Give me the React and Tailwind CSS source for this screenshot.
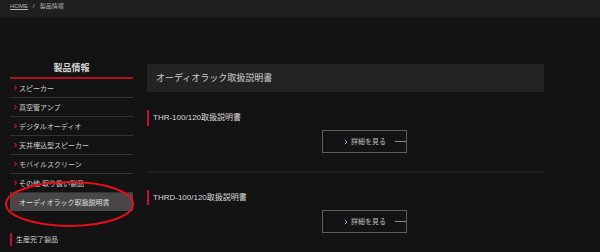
const SIDE_ITEMS = [
  'スピーカー',
  '真空管アンプ',
  'デジタルオーディオ',
  '天井埋込型スピーカー',
  'モバイルスクリーン',
  'その他 取り扱い製品',
];

const MANUALS = ['THR-100/120取扱説明書', 'THRD-100/120取扱説明書'];

function RedChevron() {
  return (
    <svg width="3" height="6" viewBox="0 0 3 6" className="shrink-0">
      <polyline points="0.5,1 2.5,3 0.5,5" fill="none" stroke="#c8102e" strokeWidth="1.1" />
    </svg>
  );
}

function DetailButton() {
  return (
    <div className="ml-[175px] flex h-[23px] w-[85px] items-center border border-[#5e5e5e]">
      <svg width="4" height="6" viewBox="0 0 4 6" className="ml-[21px] shrink-0">
        <polyline points="0.8,0.8 3,3 0.8,5.2" fill="none" stroke="#a0a0a0" strokeWidth="1" />
      </svg>
      <span className="ml-[3px] text-[7px] leading-none text-[#bdbdbd]">詳細を見る</span>
      <div className="ml-auto h-px w-[11px] bg-[#8a8a8a]" />
    </div>
  );
}

export default function App() {
  return (
    <div
      className="relative h-[252px] w-[600px] overflow-hidden bg-[#131313]"
      style={{ fontFamily: "'Liberation Sans', 'Noto Sans CJK JP', sans-serif" }}
    >
      {/* Breadcrumb */}
      <div className="flex h-[17px] items-center gap-[5px] bg-[#1f1f1f] px-[10px] pb-[5px] text-[6px] leading-none text-[#b5b5b5]">
        <span className="underline">HOME</span>
        <span>/</span>
        <span>製品情報</span>
      </div>

      <div className="flex gap-[14px] px-[10px]">
        {/* Sidebar */}
        <aside className="w-[123px]">
          <div className="flex h-[60px] items-end justify-center pb-[4px] text-[9px] font-bold leading-none text-[#d6d6d6]">
            製品情報
          </div>
          <div className="h-[2px] bg-[#b01020]" />
          <ul>
            {SIDE_ITEMS.map((item) => (
              <li
                key={item}
                className="flex h-[19px] items-center gap-[2px] border-b border-[#333] pl-[4px] text-[7px] leading-none text-[#cfcfcf]"
              >
                <RedChevron />
                {item}
              </li>
            ))}
            <li className="flex h-[18px] items-center gap-[2px] bg-[#474747] pl-[4px] text-[7px] leading-none text-[#e0e0e0]">
              <RedChevron />
              オーディオラック取扱説明書
            </li>
          </ul>
          <div className="mt-[22px] flex h-[13px] items-center border-l-2 border-[#c8102e] pl-[4px] text-[7px] leading-none text-[#cfcfcf]">
            生産完了製品
          </div>
        </aside>

        {/* Main */}
        <main className="w-[397px] pt-[47px]">
          <div className="flex h-[28px] items-center bg-[#232323] pl-[9px] text-[9px] leading-none text-[#cfcfcf]">
            オーディオラック取扱説明書
          </div>

          <section className="pt-[18px]">
            <h2 className="flex h-[16px] items-center border-l-2 border-[#c8102e] pl-[4px] text-[8px] font-normal leading-none text-[#dcdcdc]">
              {MANUALS[0]}
            </h2>
            <div className="mt-[4px]">
              <DetailButton />
            </div>
          </section>

          <div className="mt-[18px] h-[2px] bg-[#1f1f1f]" />

          <section className="pt-[17px]">
            <h2 className="flex h-[15px] items-center border-l-2 border-[#c8102e] pl-[4px] text-[8px] font-normal leading-none text-[#dcdcdc]">
              {MANUALS[1]}
            </h2>
            <div className="mt-[5px]">
              <DetailButton />
            </div>
          </section>
        </main>
      </div>

      {/* Red annotation ellipse */}
      <svg className="pointer-events-none absolute left-0 top-0" width="600" height="252">
        <ellipse cx="69.5" cy="204" rx="63.5" ry="22" fill="none" stroke="#e3101c" strokeWidth="2" />
      </svg>
    </div>
  );
}
